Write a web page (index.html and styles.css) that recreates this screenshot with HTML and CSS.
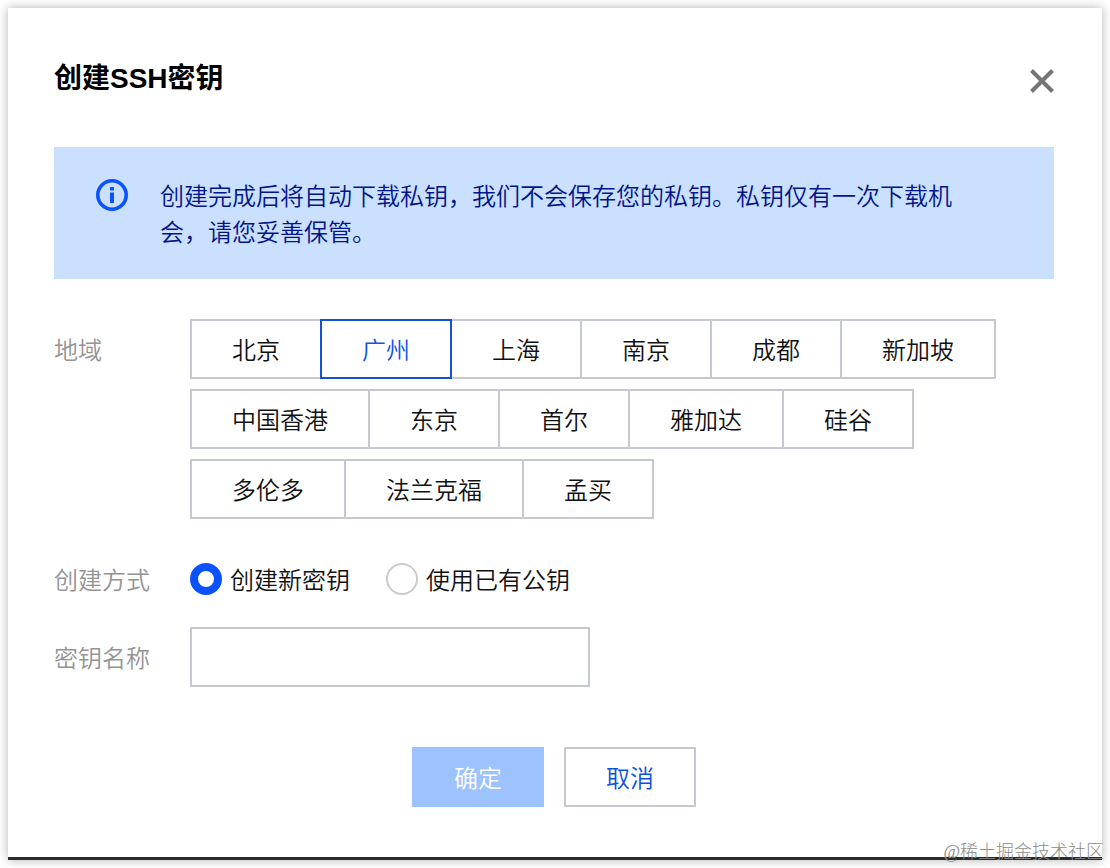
FILE: index.html
```html
<!DOCTYPE html>
<html lang="zh-CN">
<head>
  <meta charset="UTF-8" />
  <meta name="viewport" content="width=device-width, initial-scale=1.0"/>
  <title>创建SSH密钥</title>
  <link rel="stylesheet" href="styles.css">
</head>
<body>
  <form class="dialog">
    <div class="dialog-header">
      <h1>创建SSH密钥</h1>
      <button type="button" class="close-btn" aria-label="关闭">
        <svg width="24" height="24" viewBox="0 0 24 24" fill="none" stroke="#757575" stroke-width="4">
          <path d="M1.5 1.5l21 21M22.5 1.5l-21 21"/>
        </svg>
      </button>
    </div>

    <div class="alert">
      <svg class="alert-icon" width="32" height="32" viewBox="0 0 32 32" fill="none">
        <circle cx="16" cy="16" r="14.2" stroke="#0a52ff" stroke-width="3.6"/>
        <path d="M14 8h4v3.5h-4zM14 13.5h4v10.5h-4z" fill="#0a52ff"/>
      </svg>
      <p>创建完成后将自动下载私钥，我们不会保存您的私钥。私钥仅有一次下载机会，请您妥善保管。</p>
    </div>

    <div class="form-row region-row">
      <span class="label" id="region-label">地域</span>
      <div class="regions" role="group" aria-labelledby="region-label">
        <button type="button" class="region">北京</button>
        <button type="button" class="region active">广州</button>
        <button type="button" class="region">上海</button>
        <button type="button" class="region">南京</button>
        <button type="button" class="region">成都</button>
        <button type="button" class="region">新加坡</button>
        <button type="button" class="region">中国香港</button>
        <button type="button" class="region">东京</button>
        <button type="button" class="region">首尔</button>
        <button type="button" class="region">雅加达</button>
        <button type="button" class="region">硅谷</button>
        <button type="button" class="region">多伦多</button>
        <button type="button" class="region">法兰克福</button>
        <button type="button" class="region">孟买</button>
      </div>
    </div>

    <div class="form-row method-row">
      <span class="label" id="method-label">创建方式</span>
      <div class="methods" role="radiogroup" aria-labelledby="method-label">
        <label class="method"><input type="radio" name="method" value="new" checked>创建新密钥</label>
        <label class="method"><input type="radio" name="method" value="existing">使用已有公钥</label>
      </div>
    </div>

    <div class="form-row name-row">
      <label class="label" for="key-name">密钥名称</label>
      <input type="text" class="text-input" id="key-name">
    </div>

    <div class="actions">
      <button type="submit" class="btn btn-primary" disabled>确定</button>
      <button type="button" class="btn">取消</button>
    </div>
  </form>

  <div class="watermark">@稀土掘金技术社区</div>

  <script>
    const regions = document.querySelectorAll('.region');
    const nameInput = document.getElementById('key-name');
    const submitBtn = document.querySelector('.btn-primary');

    regions.forEach(btn => {
      btn.addEventListener('click', () => {
        regions.forEach(r => r.classList.remove('active'));
        btn.classList.add('active');
      });
    });

    nameInput.addEventListener('input', () => {
      submitBtn.disabled = !nameInput.value.trim();
    });
  </script>
</body>
</html>
```

FILE: styles.css
```css
* { box-sizing: border-box; }

body {
  margin: 0;
  padding: 8px;
  background: #fff;
  color: #111;
  font-family: "Noto Sans CJK SC", sans-serif;
  font-size: 24px;
  font-weight: 350;
  line-height: 36px;
}

button, input {
  font: inherit;
  color: inherit;
}

button { cursor: pointer; }

.dialog {
  padding: 48px 48px 50px 46px;
  background: #fff;
  border-bottom: 3px solid #2b2b2b;
  box-shadow: 0 0 10px rgba(0, 0, 0, 0.3);
}

.dialog-header {
  display: flex;
  align-items: center;
  justify-content: space-between;
  height: 46px;
}

h1 {
  margin: 0;
  color: #000;
  font-family: "Liberation Sans", "Noto Sans CJK SC", sans-serif;
  font-size: 28px;
  font-weight: bold;
}

.close-btn {
  display: flex;
  padding: 4px 0 0;
  border: none;
  background: none;
}

.alert {
  display: flex;
  gap: 32px;
  margin-top: 45px;
  padding: 30px 84px 30px 42px;
  background: #cbdffe;
  color: #00158a;
}

.alert-icon {
  flex: none;
  margin-top: 2px;
}

.alert p { margin: 0; }

.form-row {
  display: flex;
  align-items: center;
}

.label {
  flex: none;
  width: 136px;
  color: #949494;
}

.region-row {
  align-items: flex-start;
  margin-top: 40px;
}

.region-row .label { line-height: 60px; }

.regions {
  display: flex;
  flex-wrap: wrap;
  row-gap: 10px;
}

.region {
  height: 60px;
  margin-right: -2px;
  padding: 0 40px;
  border: 2px solid #c6c9d0;
  background: #fff;
}

.region.active {
  position: relative;
  border-color: #1152d6;
  color: #0f55e8;
}

.method-row { margin-top: 42px; }

.methods {
  display: flex;
  gap: 36px;
}

.method {
  display: flex;
  align-items: center;
  gap: 8px;
}

.method input {
  appearance: none;
  width: 32px;
  height: 32px;
  margin: 0;
  border: 2px solid #c9cbd0;
  border-radius: 50%;
}

.method input:checked { border: 8px solid #0a52ff; }

.name-row { margin-top: 30px; }

.text-input {
  width: 400px;
  height: 60px;
  padding: 0 16px;
  border: 2px solid #c6c9d0;
  background: #fff;
}

.actions {
  display: flex;
  justify-content: center;
  gap: 20px;
  margin-top: 60px;
}

.btn {
  height: 60px;
  padding: 0 40px;
  border: 2px solid #c6c9d0;
  background: #fff;
  color: #0d50dc;
}

.btn-primary {
  border-color: #0a52ff;
  background: #0a52ff;
  color: #fff;
}

.btn-primary:disabled {
  border-color: #9cc3ff;
  background: #9cc3ff;
}

.watermark {
  position: absolute;
  right: 6px;
  bottom: 4px;
  color: #8c8c8c;
  font-family: "Liberation Serif", "Noto Sans CJK SC", serif;
  font-size: 18px;
  font-weight: 300;
  line-height: 24px;
}
```
